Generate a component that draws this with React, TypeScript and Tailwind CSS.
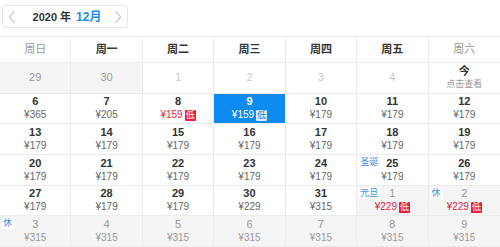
import React from "react";

type Cell = {
  day: string;
  price?: string;
  kind: "prev" | "dim" | "today" | "normal" | "selected" | "next";
  low?: boolean;
  label?: string;
};

const rows: Cell[][] = [
  [
    { day: "29", kind: "prev" },
    { day: "30", kind: "prev" },
    { day: "1", kind: "dim" },
    { day: "2", kind: "dim" },
    { day: "3", kind: "dim" },
    { day: "4", kind: "dim" },
    { day: "今", kind: "today" },
  ],
  [
    { day: "6", price: "¥365", kind: "normal" },
    { day: "7", price: "¥205", kind: "normal" },
    { day: "8", price: "¥159", kind: "normal", low: true },
    { day: "9", price: "¥159", kind: "selected", low: true },
    { day: "10", price: "¥179", kind: "normal" },
    { day: "11", price: "¥179", kind: "normal" },
    { day: "12", price: "¥179", kind: "normal" },
  ],
  [
    { day: "13", price: "¥179", kind: "normal" },
    { day: "14", price: "¥179", kind: "normal" },
    { day: "15", price: "¥179", kind: "normal" },
    { day: "16", price: "¥179", kind: "normal" },
    { day: "17", price: "¥179", kind: "normal" },
    { day: "18", price: "¥179", kind: "normal" },
    { day: "19", price: "¥179", kind: "normal" },
  ],
  [
    { day: "20", price: "¥179", kind: "normal" },
    { day: "21", price: "¥179", kind: "normal" },
    { day: "22", price: "¥179", kind: "normal" },
    { day: "23", price: "¥179", kind: "normal" },
    { day: "24", price: "¥179", kind: "normal" },
    { day: "25", price: "¥179", kind: "normal", label: "圣诞" },
    { day: "26", price: "¥179", kind: "normal" },
  ],
  [
    { day: "27", price: "¥179", kind: "normal" },
    { day: "28", price: "¥179", kind: "normal" },
    { day: "29", price: "¥179", kind: "normal" },
    { day: "30", price: "¥229", kind: "normal" },
    { day: "31", price: "¥315", kind: "normal" },
    { day: "1", price: "¥229", kind: "next", low: true, label: "元旦" },
    { day: "2", price: "¥229", kind: "next", low: true, label: "休" },
  ],
  [
    { day: "3", price: "¥315", kind: "next", label: "休" },
    { day: "4", price: "¥315", kind: "next" },
    { day: "5", price: "¥315", kind: "next" },
    { day: "6", price: "¥315", kind: "next" },
    { day: "7", price: "¥315", kind: "next" },
    { day: "8", price: "¥315", kind: "next" },
    { day: "9", price: "¥315", kind: "next" },
  ],
];

const weekdays = ["周日", "周一", "周二", "周三", "周四", "周五", "周六"];

function Low({ selected }: { selected?: boolean }) {
  return selected ? (
    <span className="ml-[2px] inline-flex h-[11px] w-[11px] items-center justify-center rounded-[1px] bg-[#d6eafc] text-[9px] leading-none text-[#0e8bf0]">
      低
    </span>
  ) : (
    <span className="ml-[2px] inline-flex h-[11px] w-[11px] items-center justify-center rounded-[1px] bg-[#e8213f] text-[9px] leading-none text-white">
      低
    </span>
  );
}

function DayCell({ c, last }: { c: Cell; last: boolean }) {
  const bg =
    c.kind === "prev" || c.kind === "next"
      ? "bg-[#f5f5f5]"
      : c.kind === "selected"
      ? "bg-[#0e8bf0]"
      : "bg-white";
  const numCls =
    c.kind === "prev"
      ? "text-[#999] font-normal"
      : c.kind === "dim"
      ? "text-[#c8c8c8] font-normal"
      : c.kind === "next"
      ? "text-[#999] font-normal"
      : c.kind === "selected"
      ? "text-white font-bold"
      : "text-[#333] font-bold";
  const priceCls = c.low
    ? c.kind === "selected"
      ? "text-white"
      : "text-[#e8213f]"
    : c.kind === "next"
    ? "text-[#999]"
    : c.kind === "selected"
    ? "text-white"
    : "text-[#666]";
  return (
    <div
      className={`relative flex flex-col items-center justify-center ${bg} ${
        last ? "" : "border-r border-[#ececec]"
      } border-b border-[#ececec]`}
    >
      {c.label && (
        <span className="absolute left-[1px] top-[2px] bg-white px-[2px] text-[9px] leading-[11px] text-[#3d8fe6]">
          {c.label}
        </span>
      )}
      <div className={`text-[11px] leading-[13px] ${numCls}`}>{c.day}</div>
      {c.kind === "today" && (
        <div className="mt-[1px] text-[9px] leading-[11px] text-[#999]">点击查看</div>
      )}
      {c.price && (
        <div className={`mt-[1px] flex items-center text-[10px] leading-[12px] ${priceCls}`}>
          {c.price}
          {c.low && <Low selected={c.kind === "selected"} />}
        </div>
      )}
    </div>
  );
}

export default function App() {
  return (
    <div
      className="h-[247px] w-[500px] overflow-hidden bg-white"
      style={{ fontFamily: '"Liberation Sans", "Noto Sans CJK SC", sans-serif' }}
    >
      <div className="h-[36px] pl-[2px] pt-[5px]">
        <div className="flex h-[23px] w-[126px] items-center justify-between rounded-[3px] border border-[#e6e6e6] px-[5px]">
          <svg width="8" height="14" viewBox="0 0 8 14" fill="none">
            <path d="M6.5 1L1.5 7L6.5 13" stroke="#c0c0c0" strokeWidth="1.1" />
          </svg>
          <div className="flex items-baseline pl-[4px]">
            <span className="text-[11px] font-bold text-[#333]">2020 年</span>
            <span className="ml-[5px] text-[12px] font-bold text-[#1a8cf0]">12月</span>
          </div>
          <svg width="8" height="14" viewBox="0 0 8 14" fill="none">
            <path d="M1.5 1L6.5 7L1.5 13" stroke="#c0c0c0" strokeWidth="1.1" />
          </svg>
        </div>
      </div>
      <div className="grid h-[27px] grid-cols-7 border-y border-[#ececec]">
        {weekdays.map((w, i) => (
          <div
            key={w}
            className={`flex items-center justify-center text-[11px] ${
              i < 6 ? "border-r border-[#ececec]" : ""
            } ${i === 0 || i === 6 ? "text-[#999]" : "font-bold text-[#333]"}`}
          >
            {w}
          </div>
        ))}
      </div>
      <div className="grid h-[184px] grid-cols-7 grid-rows-6">
        {rows.map((r, ri) =>
          r.map((c, ci) => <DayCell key={`${ri}-${ci}`} c={c} last={ci === 6} />)
        )}
      </div>
    </div>
  );
}
